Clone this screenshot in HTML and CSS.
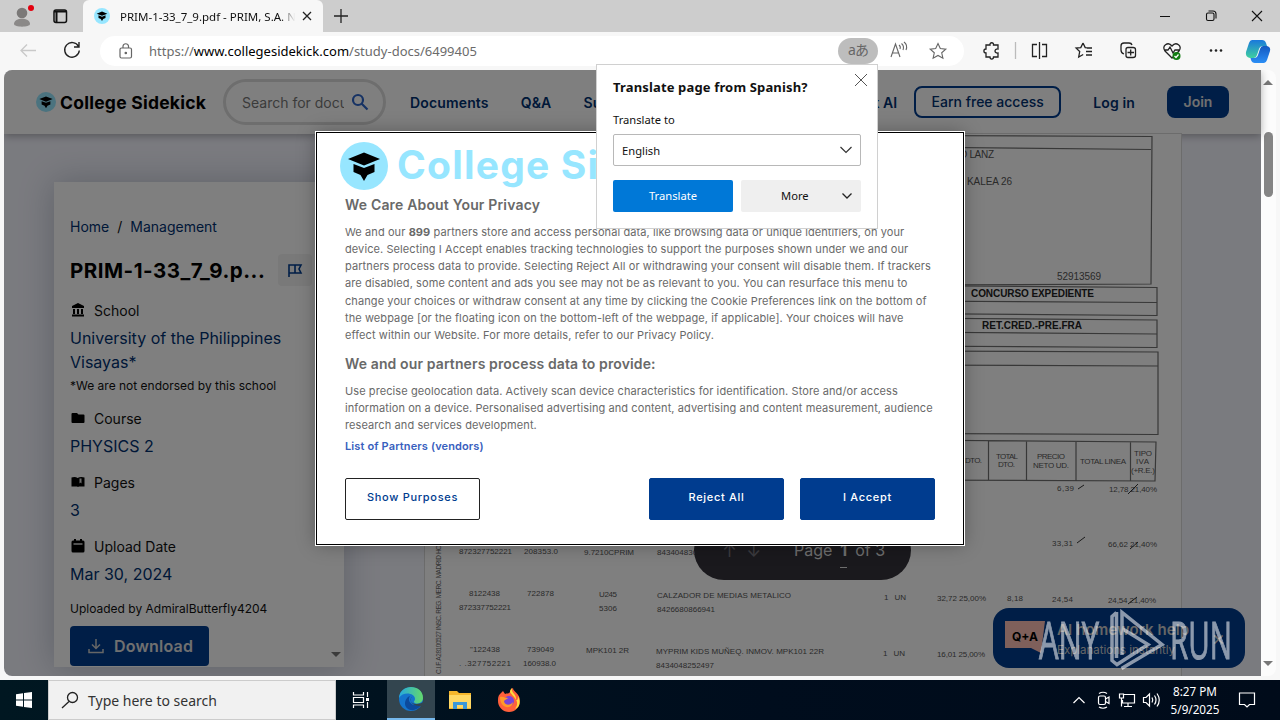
FILE: index.html
```html
<!DOCTYPE html>
<html lang="en">
<head>
  <meta charset="UTF-8">
  <title>PRIM-1-33_7_9.pdf - PRIM, S.A.</title>
  <link rel="stylesheet" href="styles.css">
</head>
<body>
  <svg width="0" height="0" class="defs">
    <symbol id="cap" viewBox="0 0 48 48">
      <circle cx="24" cy="24" r="24" fill="#97e6ff"/>
      <path d="M24 10.500L40 17 24 23.500 8 17zM13.500 22l10.500 4 10.500-4v8l-7 3-3.500 6-3.500-6-7-3z" fill="#000"/>
    </symbol>
  </svg>

  <!-- Browser tabs -->
  <div class="tabbar">
    <svg class="tab-tools" width="83" height="32" viewBox="0 0 83 32">
      <circle cx="22" cy="13" r="5.300" fill="#7b7978"/>
      <path d="M14 24c0-7 16-7 16 0 0 3.500-16 3.500-16 0z" fill="#8b8988"/>
      <circle cx="31" cy="8" r="3" fill="#e3000f"/>
      <rect x="54" y="10" width="12.500" height="12.500" rx="2" fill="none" stroke="#111" stroke-width="1.500"/>
      <path d="M54 11.500h12M56.500 12v10" stroke="#111" stroke-width="2"/>
    </svg>
    <div class="tab">
      <svg width="16" height="16"><use href="#cap"/></svg>
      <span class="tab-title">PRIM-1-33_7_9.pdf - PRIM, S.A. N</span>
      <svg width="10" height="10" viewBox="0 0 10 10"><path d="M1 1l8 8M9 1l-8 8" stroke="#222" stroke-width="1.300"/></svg>
    </div>
    <svg class="plus" width="14" height="14" viewBox="0 0 14 14"><path d="M7 0v14M0 7h14" stroke="#222" stroke-width="1.300"/></svg>
    <svg class="win-buttons" width="120" height="32" viewBox="0 0 120 32" fill="none" stroke="#111" stroke-width="1.100">
      <path d="M0 16.500h10M92 11l10 10M102 11l-10 10"/>
      <rect x="46.500" y="13" width="7.500" height="7.500" rx="1.500"/>
      <path d="M48.500 11h4.500q3 0 3 3v4.500"/>
    </svg>
  </div>

  <!-- Address bar -->
  <div class="toolbar">
    <svg class="nav-icons" width="84" height="38" viewBox="0 0 84 38" fill="none">
      <path d="M36 18.500H21M27 12.500l-6 6 6 6" stroke="#c9c9c9" stroke-width="1.300"/>
      <path d="M78.500 14.500a7.300 7.300 0 1 0 .8 4M79 10v5h-5" stroke="#222" stroke-width="1.400"/>
    </svg>
    <div class="address">
      <svg width="14" height="18" viewBox="0 0 14 18" fill="none" stroke="#666" stroke-width="1.200">
        <rect x="1" y="6" width="11.500" height="10" rx="1.500"/><path d="M4 6V4a2.800 2.800 0 0 1 5.500 0v2"/><circle cx="6.800" cy="11" r=".7" fill="#666"/>
      </svg>
      <span class="url">https://<b>www.collegesidekick.com</b>/study-docs/6499405</span>
      <span class="lang">aあ</span>
      <svg class="page-actions" width="74" height="28" viewBox="0 0 74 28" fill="none" stroke="#666" stroke-width="1.100">
        <path d="M7 20l4.500-13L16 20M8.500 16h6M15 8q2 1.500 1 4M17.500 6.500q3 2.500 1.500 6.500M20 5q4 3 2 8"/>
        <path d="M54 6.500l2.300 5 5.500.6-4.100 3.700 1.200 5.400-4.900-2.800-4.900 2.800 1.200-5.400-4.100-3.700 5.500-.6z"/>
      </svg>
    </div>
    <svg class="tools" width="316" height="38" viewBox="964 0 316 38" fill="none" stroke="#222" stroke-width="1.300">
      <path d="M986 13h4c-.5-3 4-3 3.500 0h4.500v4c-4-.5-4 4.500 0 4v4h-4.500c0 2.800-3.500 2.800-3.500 0h-4v-4c-2.800 0-2.800-4 0-4z"/>
      <path d="M1015.500 10v17" stroke="#bbb"/>
      <path d="M1037 12.500h-4.500v12h4.500M1042 12.500h4.500v12h-4.500M1039.500 10v17"/>
      <path d="M1083 11l2.200 4.600 5 .5M1083 11l-2.200 4.600-4.700.5 3.600 3.400-1 5.500 4.500-2.500M1087 16h5M1086 19.500h6M1086 23h6"/>
      <path d="M1126 17.500q0-2 2-2h5q2.500 0 2.500 2v6q0 2-2.500 2h-5q-2 0-2-2zM1130.700 17.500v6M1127.500 20.500h6.500M1124 22q-3-1-3-4v-4q0-3 3-3h5q2.500 0 3 2"/>
      <path d="M1172 26l-7-7c-4-5 3-10 7-5 4-5 11 0 7 5zM1164 18h4l2-3 3 6 2-3h5"/>
      <circle cx="1176.500" cy="24" r="4" fill="#107c10" stroke="none"/><path d="M1174.500 24l1.500 1.500 2.500-3" stroke="#fff"/>
      <g fill="#222" stroke="none"><circle cx="1211" cy="18.500" r="1.300"/><circle cx="1216" cy="18.500" r="1.300"/><circle cx="1221" cy="18.500" r="1.300"/></g>
      <defs>
        <linearGradient id="cl" x1="0" y1="0" x2="0" y2="1"><stop offset="0" stop-color="#1a78dc"/><stop offset="1" stop-color="#3fd0a0"/></linearGradient>
        <linearGradient id="cr" x1="0" y1="0" x2="0" y2="1"><stop offset="0" stop-color="#1458c0"/><stop offset="1" stop-color="#2b8ef5"/></linearGradient>
      </defs>
      <g stroke="none">
        <path d="M1252 8h10q3 0 4 3l1 3h-4q-3 0-4 3l-2 6q-1 3-3 3h-4q-5-1-4-6l3-9q1-3 3-3z" fill="url(#cl)"/>
        <path d="M1264 31h-9q-3 0-4-3l-.5-2h3.500q3 0 4-3l2-6q1-3 3-3h4q4 1 3 5l-3 9q-1 3-3 3z" fill="url(#cr)"/>
      </g>
    </svg>
  </div>

  <div class="window">
    <div class="page">
      <header class="site-header">
        <div class="logo"><svg width="20" height="20"><use href="#cap"/></svg><span>College Sidekick</span></div>
        <div class="search">
          <span>Search for docum</span>
          <svg width="18" height="18" viewBox="0 0 18 18" fill="none" stroke="#2c64c8" stroke-width="2.200"><circle cx="7" cy="7" r="5"/><path d="M10.500 10.500l6 6"/></svg>
        </div>
        <nav><a>Documents</a><a>Q&amp;A</a><a>Subjects</a></nav>
        <div class="actions">
          <a class="ask">Ask AI</a>
          <a class="earn">Earn free access</a>
          <a class="login">Log in</a>
          <a class="join">Join</a>
        </div>
      </header>

      <main>
        <aside class="card">
          <div class="crumbs"><a>Home</a><i>/</i><a>Management</a></div>
          <div class="title-row">
            <h1>PRIM-1-33_7_9.p...</h1>
            <span class="flag"><svg width="16" height="16" viewBox="0 0 16 16" fill="none" stroke="#003c8f" stroke-width="1.600"><path d="M2 15V3h12l-2 4 2 4H2M8 3v8"/></svg></span>
          </div>
          <div class="label"><svg width="16" height="16" viewBox="0 0 16 16"><path d="M8 1L2 4v2h12V4zM3 7h2v5H3zM7 7h2v5H7zM11 7h2v5h-2zM2 12.500h12v2H2z"/></svg><span>School</span></div>
          <a class="value">University of the Philippines<br>Visayas*</a>
          <p class="small">*We are not endorsed by this school</p>
          <div class="label l10"><svg width="16" height="16" viewBox="0 0 16 16"><path d="M1.500 4q0-1 1-1H7l1.500 1.500h5q1 0 1 1V12q0 1-1 1h-11q-1 0-1-1z"/></svg><span>Course</span></div>
          <a class="value">PHYSICS 2</a>
          <div class="label"><svg width="16" height="16" viewBox="0 0 16 16"><path d="M1.500 3.500q4-1 6 .5 3-1.500 7-.5v9H9L8 13l-1-.5H1.500z"/><path d="M7.500 4v8M9.500 4.500h2v5l-1-1-1 1z" fill="#ddd"/></svg><span>Pages</span></div>
          <a class="value">3</a>
          <div class="label"><svg width="16" height="16" viewBox="0 0 16 16"><path d="M1.500 4q0-1.500 1.500-1.500h1V1h2v1.500h4V1h2v1.500h1q1.500 0 1.500 1.500v9q0 1.500-1.500 1.500H3q-1.500 0-1.500-1.500z"/><path d="M3.500 6h9" stroke="#ddd" stroke-width="1.500"/></svg><span>Upload Date</span></div>
          <a class="value">Mar 30, 2024</a>
          <p class="small s-up">Uploaded by AdmiralButterfly4204</p>
          <a class="download">
            <svg width="16" height="16" viewBox="0 0 16 16" fill="none" stroke="#ccc" stroke-width="1.500"><path d="M8 1v9M4 6.500l4 4 4-4M1 11v3.500h14V11"/></svg>Download
          </a>
          <span class="card-arrow"></span>
        </aside>

        <!-- Scanned invoice -->
        <section class="doc">
          <svg width="756" height="542" viewBox="425 134 756 542" fill="none">
            <g stroke="#707070" stroke-width="1.200">
              <path d="M900 135.500l252 1-1 147.500-250 1M900 147l251 2.500M1151 137"/>
              <path d="M900 285.500l257 2v28l-257-2M900 301l257 1.500"/>
              <path d="M900 318l257 2v27.500l-257-1.500M900 332l257 2"/>
              <path d="M900 351l258 1v82.500l-258-1M900 365l258 1"/>
              <path d="M900 440l256 2-1 39-255-1M988.500 441v40M1026.500 441v40M1076 441v40M1130.500 442v39"/>
            </g>
            <g class="scan">
              <text x="960" y="157.500" textLength="34">D LANZ</text>
              <text x="967" y="184.500" textLength="45">KALEA 26</text>
              <text x="1057" y="280" textLength="44">52913569</text>
            </g>
            <g class="scan bold">
              <text x="971" y="297" textLength="123">CONCURSO EXPEDIENTE</text>
              <text x="982" y="328.500" textLength="100">RET.CRED.-PRE.FRA</text>
            </g>
            <g class="scan tiny">
              <text x="965" y="463" textLength="17">DTO.</text>
              <text x="996" y="459" textLength="22">TOTAL</text><text x="998" y="467" textLength="17">DTO.</text>
              <text x="1037" y="459" textLength="28">PRECIO</text><text x="1033" y="467.500" textLength="36">NETO UD.</text>
              <text x="1080" y="464" textLength="46">TOTAL LINEA</text>
              <text x="1134" y="456" textLength="18">TIPO</text><text x="1136" y="464" textLength="13">IVA</text><text x="1131" y="472.500" textLength="24">(+R.E.)</text>
              <text x="1057" y="490.500" textLength="17">6,39</text><text x="1109" y="491.500" textLength="48">12,78 21,40%</text>
              <text x="1052" y="546" textLength="21">33,31</text><text x="1108" y="547" textLength="49">66,62 21,40%</text>
              <text x="459" y="554" textLength="53">872327752221</text><text x="524" y="554" textLength="34">208353.0</text><text x="584" y="554.500" textLength="50">9.7210CPRIM</text><text x="657" y="555" textLength="58">8434048300517</text>
              <text x="469" y="595.500" textLength="31">8122438</text><text x="527" y="596" textLength="27">722878</text><text x="599" y="597" textLength="18">U245</text><text x="657" y="598" textLength="134">CALZADOR DE MEDIAS METALICO</text>
              <text x="459" y="609.500" textLength="52">872337752221</text><text x="599" y="611" textLength="18">5306</text><text x="657" y="611.500" textLength="58">8426680866941</text>
              <text x="884" y="600" textLength="22">1&#160;&#160;&#160;UN</text><text x="937" y="600.500" textLength="49">32,72 25,00%</text><text x="1007" y="601" textLength="16">8,18</text><text x="1052" y="602" textLength="21">24,54</text><text x="1108" y="603" textLength="48">24,54 21,40%</text>
              <text x="470" y="651.500" textLength="30">"122438</text><text x="527" y="652" textLength="27">739049</text><text x="586" y="653" textLength="43">MPK101 2R</text><text x="656" y="654" textLength="168">MYPRIM KIDS MUÑEQ. INMOV. MPK101 22R</text>
              <text x="459" y="665.500" textLength="52">. .327752221</text><text x="523" y="666" textLength="33">160938.0</text><text x="656" y="667.500" textLength="58">8434048252497</text>
              <text x="883" y="656" textLength="22">1&#160;&#160;&#160;UN</text><text x="937" y="656.500" textLength="48">16,01 25,00%</text>
            </g>
            <path d="M1078 489l6-4M1128 494l10-10M1077 543l8-6M1130 549l8-7M1128 604l9-7" stroke="#333"/>
            <text class="scan side" transform="translate(441 674) rotate(-90)" textLength="140">C.I.F. A28100527 INSC. REG. MERC. MADRID HOJA 5</text>
          </svg>
          <div class="pager"><span class="arrows">↑&#8201;↓</span><span>Page</span><b>1</b><span>of 3</span></div>
        </section>
      </main>

      <div class="help">
        <svg width="42" height="36" viewBox="0 0 42 36"><path d="M0 1h40l-4 32-10-5H0z" fill="#ffc0b6"/><text x="7" y="21" class="qa">Q+A</text></svg>
        <div class="help-text"><b>AI homework help</b><span>Explanations instantly</span></div>
        <span class="help-x">×</span>
      </div>
      <div class="overlay"></div>
    </div>
    <div class="scrollbar"><i class="up"></i><i class="thumb"></i><i class="down"></i></div>
  </div>

  <!-- Cookie consent -->
  <div class="consent">
    <div class="brand"><svg width="48" height="48"><use href="#cap"/></svg><span>College Sidekick</span></div>
    <h2 class="h-care">We Care About Your Privacy</h2>
    <div class="text">
      <p>We and our <b>899</b> partners store and access personal data, like browsing data or unique identifiers, on your</p>
      <p>device. Selecting I Accept enables tracking technologies to support the purposes shown under we and our</p>
      <p>partners process data to provide. Selecting Reject All or withdrawing your consent will disable them. If trackers</p>
      <p>are disabled, some content and ads you see may not be as relevant to you. You can resurface this menu to</p>
      <p>change your choices or withdraw consent at any time by clicking the Cookie Preferences link on the bottom of</p>
      <p>the webpage [or the floating icon on the bottom-left of the webpage, if applicable]. Your choices will have</p>
      <p>effect within our Website. For more details, refer to our Privacy Policy.</p>
    </div>
    <h2 class="h-data">We and our partners process data to provide:</h2>
    <div class="text">
      <p>Use precise geolocation data. Actively scan device characteristics for identification. Store and/or access</p>
      <p>information on a device. Personalised advertising and content, advertising and content measurement, audience</p>
      <p>research and services development.</p>
    </div>
    <a class="vendors">List of Partners (vendors)</a>
    <div class="buttons">
      <button class="outline">Show Purposes</button>
      <button>Reject All</button>
      <button>I Accept</button>
    </div>
  </div>

  <!-- Translate prompt -->
  <div class="translate">
    <svg class="close" width="14" height="14" viewBox="0 0 14 14"><path d="M1 1l12 12M13 1L1 13" stroke="#555" stroke-width="1"/></svg>
    <h3>Translate page from Spanish?</h3>
    <label>Translate to</label>
    <div class="select"><span>English</span><svg width="12" height="8" viewBox="0 0 12 8"><path d="M.5 1L6 6.500 11.500 1" fill="none" stroke="#333" stroke-width="1.200"/></svg></div>
    <div class="choices">
      <div class="go">Translate</div>
      <div class="more"><span>More</span><svg width="10" height="8" viewBox="0 0 10 8"><path d="M.5 1.500L5 6l4.500-4.500" fill="none" stroke="#222" stroke-width="1.300"/></svg></div>
    </div>
  </div>

  <svg class="watermark" width="196" height="66" viewBox="1037 607 196 66">
    <text x="1039" y="659" textLength="60" lengthAdjust="spacingAndGlyphs">ANY</text>
    <text x="1170" y="659" textLength="62" lengthAdjust="spacingAndGlyphs">RUN</text>
    <path d="M1116.500 612.500l-4.500 4v44l5 4 31-20-26-16M1116.500 612v46M1122 655v-42.500l40 32-40.500 24"/>
  </svg>

  <!-- Taskbar -->
  <footer class="taskbar">
    <div class="start"><svg width="16" height="16" viewBox="0 0 16 16"><path d="M0 2.200L7 1.200V7.500H0zM8 1.100L16 0v7.500H8zM0 8.500h7v6.300l-7-1zM8 8.500h8V16l-8-1.100z" fill="#fff"/></svg></div>
    <div class="search-box"><svg width="18" height="18" viewBox="0 0 18 18" fill="none" stroke="#222" stroke-width="1.300"><circle cx="11.500" cy="6.500" r="5"/><path d="M8 10.500L1 17"/></svg><span>Type here to search</span></div>
    <div class="app"><svg width="18" height="18" viewBox="0 0 18 18" fill="none" stroke="#fff" stroke-width="1.200"><path d="M1.500 1v3h10V1M1.500 17v-3h10v3M1.500 6.500h10v5h-10zM15.500 1v5M15.500 11v6"/><path d="M14 7h3v3h-3z" fill="#fff" stroke="none"/></svg></div>
    <div class="app active">
      <svg width="26" height="26" viewBox="0 0 26 26">
        <defs><linearGradient id="eg" x1="0" x2="1"><stop offset="0" stop-color="#25a8e0"/><stop offset="1" stop-color="#64d96b"/></linearGradient></defs>
        <circle cx="13" cy="13" r="12" fill="#1474cd"/>
        <path d="M1 12C2-3 25-2 25 12c0 6-8 7-9 4-.5-1 1-1 1-3 0-6-12-8-16-1z" fill="url(#eg)"/>
        <path d="M12 10c-3 4 0 11 11 9-4 7-15 7-16-1 0-4 2-7 5-8z" fill="#0c4a9c"/>
        <path d="M14 11c-3 2-1 7 4 7 3 0 5-1 8-2v4c-8 1-14-2-13-7 0-1 0-2 1-2z" fill="#33454f"/>
      </svg>
    </div>
    <div class="app"><svg width="22" height="20" viewBox="0 0 22 20"><path d="M0 1h8l2 2h12v16H0z" fill="#f5b62b"/><path d="M0 5h22v13H0z" fill="#ffd864"/><path d="M4 19v-7h14v7h-4v-4H8v4z" fill="#3c98d8"/></svg></div>
    <div class="app"><svg width="24" height="24" viewBox="0 0 24 24"><path d="M3 6l3-3 2 3c2-1 4 0 5-2 0-2 1-3 3-4 0 4 7 5 7 13a11 11 0 0 1-22 0c0-3 0-5 2-7z" fill="#ff603b"/><path d="M15 0c-1 6 5 5 4 13 2-1 2-3 2-5 2 4 3 11-3 13 6-8-2-12-5-17 0-2 1-3 2-4z" fill="#ffdc3c"/><circle cx="12" cy="13" r="5" fill="#7944d8"/><path d="M3 9c3-1 5 1 8 1-1 2-4 1-4 4 2 4 7 3 9 0-1 8-13 7-13-5z" fill="#ff9a29"/></svg></div>
    <svg class="tray" width="96" height="40" viewBox="1070 0 96 40" fill="none" stroke="#fff" stroke-width="1.200">
      <path d="M1073.500 23l5.500-5.500 5.500 5.500"/>
      <rect x="1098.500" y="16" width="7" height="8.500" rx="1.500"/><path d="M1105.500 19l3.500-2v6.500l-3.500-2M1099 13.500q4-2.500 8 0M1099 27q4 2.500 8 0"/>
      <path d="M1124 14.500h10.500v8.500h-12v-3M1128 23v3.500M1124 26.500h8M1119.500 14h4v4h-4zM1121.500 18v8.500"/>
      <path d="M1143.500 17.500h2.500l3.500-3.500v12l-3.500-3.500h-2.500zM1152 17.500q1.500 2.500 0 5M1154.500 15.500q3 4.500 0 9M1157 13.500q4.500 6.500 0 13"/>
    </svg>
    <div class="clock"><span>8:27 PM</span><span>5/9/2025</span></div>
    <svg class="notif" width="18" height="18" viewBox="0 0 18 18" fill="none" stroke="#fff" stroke-width="1.200"><path d="M1.500 2h15v11.500h-5L9 16l-2.500-2.500h-5z"/></svg>
  </footer>
</body>
</html>
```
FILE: styles.css
```css
* {
  box-sizing: border-box;
}
body {
  margin: 0;
  width: 1280px;
  height: 720px;
  overflow: hidden;
  position: relative;
  display: flex;
  flex-direction: column;
  background: #f7f7f7;
  font-family: Inter, "Liberation Sans", sans-serif;
  white-space: nowrap;
}
h1, h2, h3, p {
  margin: 0;
}
svg {
  flex: none;
}
.defs {
  position: absolute;
}

/* browser */
.tabbar {
  height: 32px;
  flex: none;
  display: flex;
  align-items: center;
  background: #cdcdcd;
  font-family: "Noto Sans", sans-serif;
}
.tab {
  width: 240px;
  height: 32px;
  padding: 0 11px;
  display: flex;
  align-items: center;
  background: #f7f7f7;
  border-radius: 6px 6px 0 0;
}
.tab-title {
  width: 176px;
  margin: 0 7px 0 10px;
  overflow: hidden;
  font-size: 11.500px;
  color: #111;
  -webkit-mask-image: linear-gradient(90deg, #000 92%, transparent);
}
.plus {
  margin-left: 11px;
}
.win-buttons {
  margin-left: auto;
}
.toolbar {
  height: 38px;
  flex: none;
  display: flex;
  font-family: "Noto Sans", sans-serif;
}
.address {
  width: 864px;
  height: 30px;
  margin: 4px 0 0 16px;
  padding-left: 19px;
  display: flex;
  align-items: center;
  background: #fff;
  border-radius: 15px;
}
.url {
  width: 689px;
  margin-left: 16px;
  font-size: 13px;
  color: #6b6b6b;
}
.url b {
  font-weight: 400;
  color: #000;
}
.lang {
  width: 40px;
  height: 26px;
  border-radius: 13px;
  background: #bdbdbd;
  color: #666;
  font: 14px/24px "Noto Sans", "Noto Sans CJK JP", sans-serif;
  text-align: center;
  letter-spacing: -1px;
}
.page-actions {
  margin-left: 6px;
}

/* web page */
.window {
  height: 606px;
  flex: none;
  margin: 0 4px;
  display: flex;
  background: #fcfcfc;
  border-radius: 8px;
  overflow: hidden;
}
.page {
  width: 1257px;
  position: relative;
  display: flex;
  flex-direction: column;
  background: #f5f6ff;
}
.overlay {
  position: absolute;
  inset: 0;
  background: rgba(0, 0, 0, 0.5);
}
.scrollbar {
  flex: 1;
  padding-right: 1px;
  display: flex;
  flex-direction: column;
  align-items: center;
}
.up, .down, .card-arrow {
  border: 5px solid transparent;
  border-top: 0;
  border-bottom: 5px solid #777;
  margin-top: 10px;
}
.thumb {
  width: 9px;
  height: 65px;
  margin-top: 47px;
  border-radius: 5px;
  background: #858585;
}
.down, .card-arrow {
  margin: auto 0 10px;
  border-top: 5px solid #777;
  border-bottom: 0;
}
.site-header {
  height: 64px;
  flex: none;
  position: relative;
  display: flex;
  align-items: center;
  padding: 0 32px;
  background: #fff;
  box-shadow: 0 2px 8px rgba(0, 0, 0, 0.3);
  color: #003070;
  font-size: 14px;
  font-weight: 600;
}
.logo {
  width: 187px;
  display: flex;
  align-items: center;
  gap: 4px;
  color: #000;
  font-size: 17.500px;
  font-weight: 700;
  letter-spacing: 0.250px;
}
.search {
  width: 163px;
  height: 46px;
  padding: 0 14px 0 16px;
  display: flex;
  align-items: center;
  gap: 7px;
  border: 3px solid #dcdcdc;
  border-radius: 23px;
  color: #777;
  font-weight: 400;
}
.search span {
  width: 102px;
  overflow: hidden;
}
nav {
  display: flex;
  gap: 32px;
  margin-left: 24px;
  letter-spacing: 0.150px;
}
.actions {
  margin-left: auto;
  display: flex;
  align-items: center;
}
.earn {
  width: 147px;
  height: 32px;
  margin: 0 32px 0 17px;
  border: 2px solid #003c8f;
  border-radius: 8px;
  text-align: center;
  line-height: 28px;
  font-weight: 500;
}
.login {
  letter-spacing: 0.150px;
}
.join {
  width: 62px;
  height: 32px;
  margin-left: 32px;
  border-radius: 8px;
  background: #003c8f;
  color: #e0e0e0;
  text-align: center;
  line-height: 32px;
}
main {
  flex: 1;
  display: flex;
}
.card {
  width: 290px;
  height: 485px;
  margin: 48px 81px 0 50px;
  padding: 33px 16px 0;
  position: relative;
  background: #fff;
  box-shadow: 0 0 32px rgba(20, 40, 60, 0.25);
  font-size: 14px;
  color: #111;
}
.crumbs {
  display: flex;
  gap: 8px;
  line-height: 24px;
}
.crumbs i {
  font-style: normal;
}
.crumbs a, .value {
  color: #003070;
}
.title-row {
  display: flex;
  align-items: center;
  height: 32px;
  margin: 15px 0 12px;
}
.title-row h1 {
  width: 208px;
  font-size: 20.500px;
  letter-spacing: 0.500px;
  color: #000;
}
.flag {
  width: 34px;
  height: 32px;
  display: flex;
  align-items: center;
  justify-content: center;
  background: #f3f3f3;
  border-radius: 4px;
}
.label {
  display: flex;
  align-items: center;
  gap: 8px;
  height: 24px;
  margin-top: 12px;
}
.l10 {
  margin-top: 10px;
}
.value {
  display: block;
  margin-top: 4px;
  font-size: 16px;
  line-height: 24px;
}
.small {
  margin-top: 2px;
  font-size: 12px;
  line-height: 20px;
}
.s-up {
  margin-top: 13px;
}
.download {
  width: 139px;
  height: 40px;
  margin-top: 7px;
  padding-left: 18px;
  display: flex;
  align-items: center;
  gap: 10px;
  background: #003c8f;
  border-radius: 4px;
  color: #e0e0e0;
  font-size: 16px;
  font-weight: 600;
  letter-spacing: 0.200px;
}
.card-arrow {
  position: absolute;
  right: 3px;
  bottom: 0;
}
.doc {
  width: 756px;
  position: relative;
  background: #fff;
  box-shadow: 0 0 0 1px #d8d8d8;
}
.doc svg {
  display: block;
}
.scan {
  font-family: "Liberation Sans", sans-serif;
  font-size: 10px;
  fill: #555;
}
.bold {
  font-weight: 700;
  fill: #222;
}
.tiny {
  font-size: 8px;
}
.side {
  font-size: 6.500px;
  fill: #666;
}
.pager {
  position: absolute;
  left: 269px;
  bottom: 96px;
  width: 217px;
  height: 60px;
  padding: 16px 0 0 28px;
  display: flex;
  gap: 8px;
  background: #34323a;
  border-radius: 30px;
  color: #ddd;
  font-size: 16px;
  line-height: 29px;
}
.pager b {
  height: 32px;
  border-bottom: 1px solid #ddd;
}
.arrows {
  width: 64px;
  color: #77757d;
  font-size: 18px;
  letter-spacing: 3px;
}
.help {
  position: absolute;
  left: 989px;
  top: 538px;
  width: 252px;
  height: 60px;
  padding: 0 20px 0 12px;
  display: flex;
  align-items: center;
  background: #003c8f;
  border-radius: 16px;
  color: #ccc;
}
.qa {
  font-size: 12px;
  font-weight: 700;
}
.help-text {
  display: flex;
  flex-direction: column;
  margin-left: 10px;
  gap: 4px;
  font-size: 11.500px;
}
.help-text b {
  font-size: 15px;
  font-weight: 600;
  letter-spacing: 0.100px;
}
.help-x {
  margin-left: auto;
  font-size: 20px;
}

/* consent dialog */
.consent {
  position: absolute;
  left: 316px;
  top: 132px;
  width: 648px;
  height: 413px;
  padding: 9px 28px 0;
  background: #fff;
  border: 1px solid #000;
  box-shadow: 0 0 0 1px #fff, 0 0 18px rgba(0, 0, 0, 0.3);
  color: #696969;
}
.brand {
  display: flex;
  align-items: center;
  gap: 9px;
  height: 48px;
  margin-left: -5px;
  color: #97e6ff;
  font-size: 39px;
  font-weight: 700;
  letter-spacing: 1.200px;
}
.brand span {
  width: 240px;
  padding-bottom: 3px;
  overflow: hidden;
}
.consent h2 {
  font-size: 14px;
  font-weight: 600;
  line-height: 20px;
  letter-spacing: 0.120px;
}
.consent .h-care {
  margin: 5px 0 9px;
  letter-spacing: 0.170px;
}
.h-data {
  margin: 10px 0 9px;
}
.text p {
  font-size: 11px;
  line-height: 17.150px;
  letter-spacing: 0.090px;
}
.vendors {
  display: block;
  margin-top: 3px;
  font-size: 11px;
  line-height: 16px;
  font-weight: 600;
  letter-spacing: 0.130px;
  color: #3860be;
}
.buttons {
  display: flex;
  gap: 16px;
  margin-top: 24px;
}
.consent button {
  width: 135px;
  height: 42px;
  padding: 0 0 3px;
  border: 1px solid #003c8f;
  border-radius: 2px;
  background: #003c8f;
  color: #fff;
  font: 500 11px Inter, sans-serif;
  letter-spacing: 0.700px;
}
.consent .outline {
  margin-right: auto;
  background: #fff;
  border-color: #222;
  color: #003c8f;
}

/* translate popup */
.translate {
  position: absolute;
  left: 596px;
  top: 64px;
  width: 282px;
  height: 165px;
  padding: 12px 16px;
  background: #fff;
  border: 1px solid #d0d0d0;
  font-family: "Noto Sans", sans-serif;
  font-size: 11.200px;
  color: #111;
}
.close {
  position: absolute;
  right: 9px;
  top: 8px;
}
.translate h3 {
  font-size: 13px;
  line-height: 20px;
  letter-spacing: 0.150px;
}
.translate label {
  display: block;
  margin-top: 14px;
  line-height: 18px;
}
.select {
  width: 248px;
  height: 32px;
  margin-top: 5px;
  padding: 0 8px;
  display: flex;
  align-items: center;
  justify-content: space-between;
  border: 1px solid #b8b8b8;
  border-radius: 2px;
}
.choices {
  display: flex;
  gap: 8px;
  margin-top: 14px;
  line-height: 32px;
  text-align: center;
}
.go, .more {
  width: 120px;
  height: 32px;
  border-radius: 2px;
  background: #0078d7;
  color: #fff;
}
.more {
  padding: 0 9px 0 40px;
  display: flex;
  align-items: center;
  justify-content: space-between;
  background: #efefef;
  color: #111;
}
.watermark {
  position: absolute;
  left: 1037px;
  top: 607px;
  fill: none;
  opacity: 0.550;
  stroke: #fff;
  stroke-width: 3.500;
}
.watermark text {
  font: 51px "Open Sans", sans-serif;
  fill: #fff;
  stroke-width: 1;
}

/* taskbar */
.taskbar {
  height: 40px;
  margin-top: 4px;
  display: flex;
  align-items: center;
  background: linear-gradient(90deg, #001721, #000d1d 60%, #000b1a);
  color: #fff;
  font-family: "Noto Sans", sans-serif;
}
.start, .app {
  width: 48px;
  height: 40px;
  display: flex;
  align-items: center;
  justify-content: center;
}
.app {
  width: 49px;
}
.active {
  width: 48px;
  margin-left: 2px;
  background: #33454f;
  border-bottom: 2px solid #76b9ed;
}
.search-box {
  width: 288px;
  height: 40px;
  padding-left: 12px;
  display: flex;
  align-items: center;
  gap: 9px;
  background: #f1f1f1;
  border: 1px solid #ccc;
  color: #333;
  font-size: 14px;
}
.tray {
  margin-left: auto;
}
.clock {
  width: 58px;
  display: flex;
  flex-direction: column;
  text-align: center;
  font-size: 11.700px;
  line-height: 18px;
}
.notif {
  margin: 0 24px 0 14px;
}
```
